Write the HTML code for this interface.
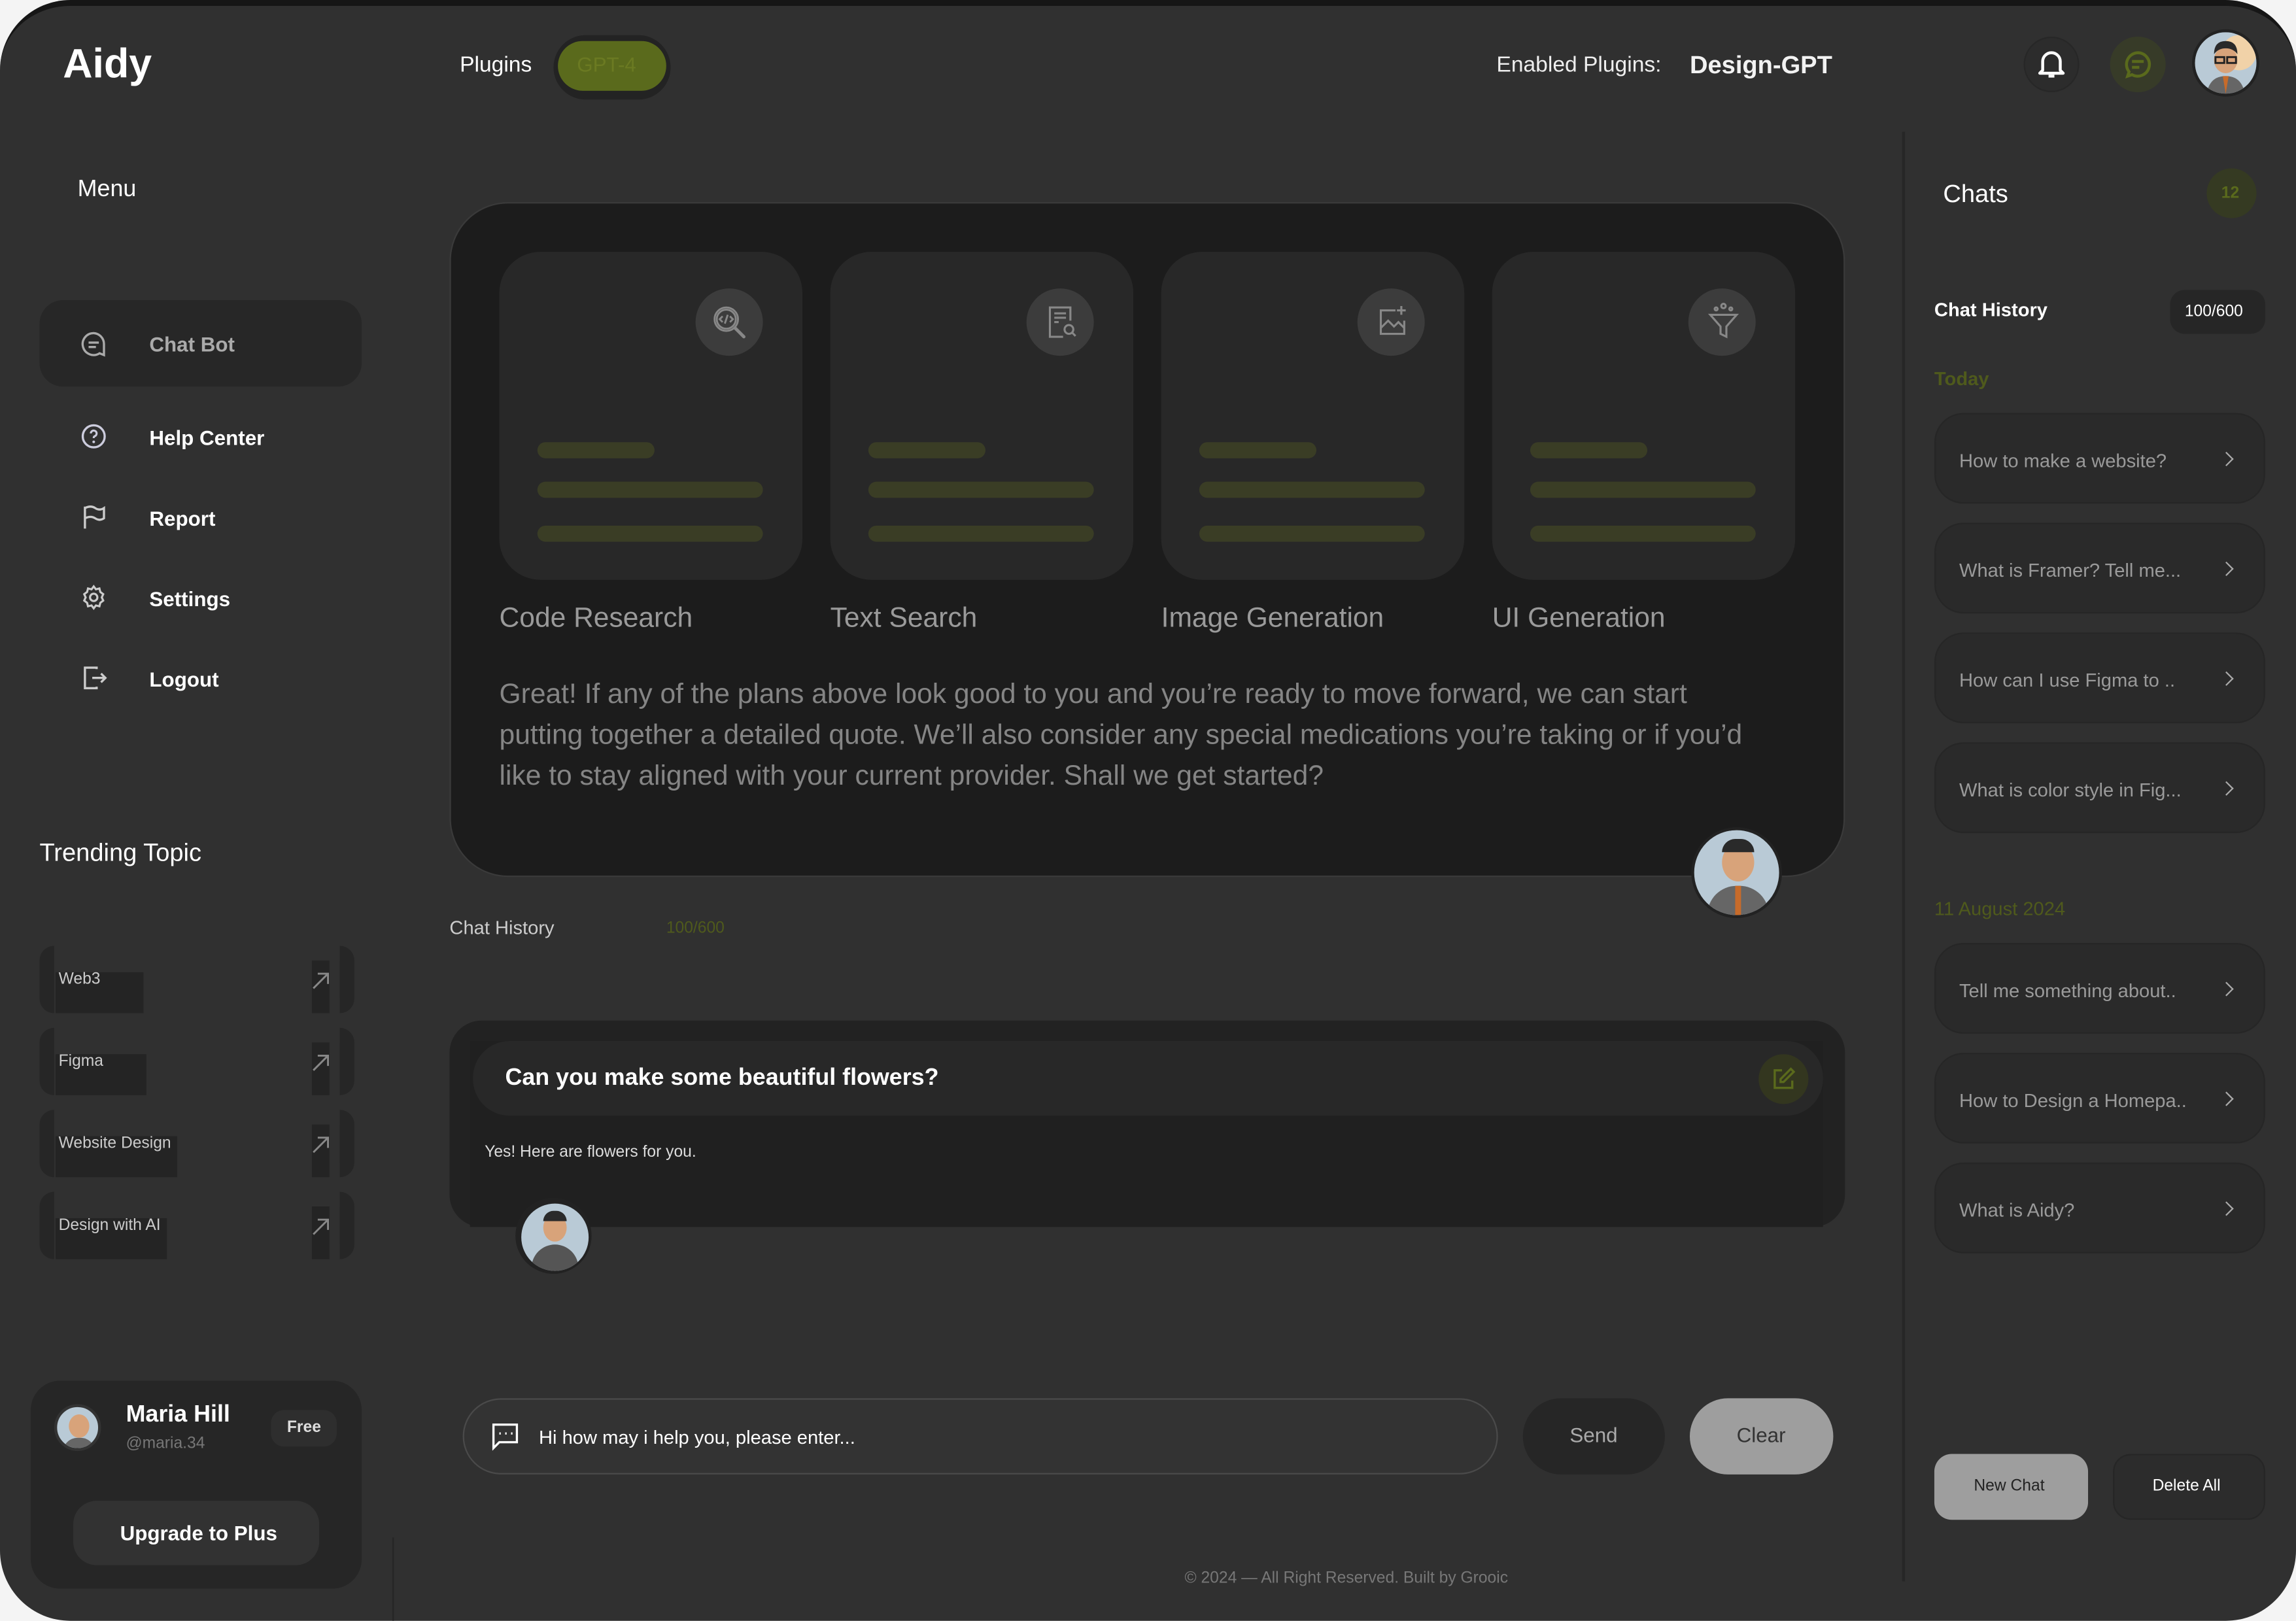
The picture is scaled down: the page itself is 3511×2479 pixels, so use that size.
<!DOCTYPE html>
<html><head><meta charset="utf-8"><style>
*{margin:0;padding:0;box-sizing:border-box}
html,body{width:3511px;height:2478px;overflow:hidden;background:#f4f4f4;font-family:"Liberation Sans",sans-serif}
#w{position:absolute;left:0;top:0;width:1568px;height:1107px;transform:scale(2.23916);transform-origin:0 0}
.a{position:absolute}
.panel{left:0;top:0;width:1568px;height:1107px;background:#303030;border-radius:48px;border-top:4px solid #161616}
.t{position:absolute;white-space:nowrap;line-height:1}
.card{position:absolute;top:172px;width:207px;height:224px;background:#282828;border-radius:28px}
.card .ic{position:absolute;left:134px;top:25px;width:46px;height:46px;border-radius:50%;background:#3c3c3c}
.bar{position:absolute;left:26px;height:11px;border-radius:6px;background:#3a3d25}
.lbl{position:absolute;top:412px;font-size:19px;color:#9a9a9a}
.item{position:absolute;left:1321px;width:226px;height:62px;background:#2a2a2a;border-radius:20px;border:1px solid #262626}
.item span{position:absolute;left:16px;top:24px;font-size:13px;color:#9a9a9a;white-space:nowrap}
.item i{position:absolute;right:22px;top:27px;width:7px;height:7px;border-right:1.5px solid #aaa;border-top:1.5px solid #aaa;transform:rotate(45deg)}
.topic{position:absolute;left:27px;width:215px;height:46px}
.topic .l{position:absolute;left:0;top:0;width:10px;height:46px;border-radius:10px 0 0 10px;background:#262626}
.topic .r{position:absolute;right:0;top:0;width:10px;height:46px;border-radius:0 10px 10px 0;background:#262626}
.topic .bg{position:absolute;left:11px;top:18px;height:28px;background:#242424}
.topic span{position:absolute;left:13px;top:17px;font-size:11px;color:#ccc;white-space:nowrap}
.topic .ab{position:absolute;left:186px;top:10px;width:12px;height:36px;background:#242424}
.menu span{position:absolute;font-size:14px;color:#fff;font-weight:bold}
</style></head><body><div id="w">
<div class="a panel"></div>
<div class="t" style="left:43px;top:30px;font-size:28px;font-weight:bold;color:#fff">Aidy</div>
<div class="t" style="left:314px;top:37px;font-size:15px;color:#fff">Plugins</div>
<div class="a" style="left:378px;top:24px;width:80px;height:44px;border-radius:22px;background:#232323"></div>
<div class="a" style="left:381px;top:28px;width:74px;height:34px;border-radius:17px;background:#5a6a1c"></div>
<div class="t" style="left:394px;top:37px;font-size:14px;color:#6b7a22">GPT-4</div>
<div class="t" style="left:1022px;top:37px;font-size:15px;color:#eee">Enabled Plugins:</div>
<div class="t" style="left:1154px;top:36px;font-size:17px;font-weight:bold;color:#f2f2f2">Design-GPT</div>
<div class="a" style="left:1382px;top:25px;width:38px;height:38px;border-radius:50%;background:#2c2c2c;border:1px solid #272727"></div>
<svg class="a" style="left:1391px;top:33px" width="20" height="22" viewBox="0 0 20 22"><path d="M4 15V9a6 6 0 0 1 12 0v6l2 2H2z" fill="none" stroke="#fff" stroke-width="2" stroke-linejoin="round"/><path d="M8 19h4" stroke="#fff" stroke-width="2"/></svg>
<div class="a" style="left:1441px;top:25px;width:38px;height:38px;border-radius:50%;background:#373b28"></div>
<svg class="a" style="left:1450px;top:34px" width="20" height="20" viewBox="0 0 20 20"><path d="M10 2a8 8 0 1 1-4 15l-3 1 1-3A8 8 0 0 1 10 2z" fill="none" stroke="#5a6a1c" stroke-width="2"/><path d="M6 8h8M6 12h5" stroke="#5a6a1c" stroke-width="2"/></svg>
<div class="a" style="left:1497px;top:20px;width:46px;height:46px;border-radius:50%;background:#222"></div>
<svg class="a" style="left:1499px;top:22px" width="42" height="42" viewBox="0 0 42 42"><defs><clipPath id="c1"><circle cx="21" cy="21" r="21"/></clipPath></defs><g clip-path="url(#c1)"><rect width="42" height="42" fill="#b9cad6"/><circle cx="30" cy="14" r="12" fill="#f1d2a8"/><path d="M8 42q2-12 13-12t13 12z" fill="#666"/><path d="M19 30l2 12 2-12z" fill="#c76b2a"/><ellipse cx="21" cy="19" rx="8" ry="9" fill="#d8a37a"/><path d="M13 15q0-9 8-9t8 9q-3-4-8-4t-8 4z" fill="#2a2a2a"/><rect x="14" y="17" width="6" height="4" fill="none" stroke="#222" stroke-width="1.3"/><rect x="22" y="17" width="6" height="4" fill="none" stroke="#222" stroke-width="1.3"/></g></svg>

<div class="t" style="left:53px;top:122px;font-size:16px;color:#fff">Menu</div>
<div class="a" style="left:27px;top:205px;width:220px;height:59px;border-radius:16px;background:#272727"></div>
<svg class="a" style="left:55px;top:226px" width="18" height="18" viewBox="0 0 18 18"><path d="M9 1.5a7.5 7.5 0 1 0 4 13.8l3 1.2V9A7.5 7.5 0 0 0 9 1.5z" fill="none" stroke="#aaa" stroke-width="1.5"/><path d="M5.5 8h7M5.5 11h5" stroke="#aaa" stroke-width="1.5"/></svg>
<div class="t" style="left:102px;top:228px;font-size:14px;color:#aaa;font-weight:bold">Chat Bot</div>
<div class="menu">
<svg class="a" style="left:55px;top:289px" width="18" height="18" viewBox="0 0 18 18"><circle cx="9" cy="9" r="7.5" fill="none" stroke="#ccd" stroke-width="1.5"/><path d="M7 7a2 2 0 1 1 2.5 2c-.5.2-.5.6-.5 1.2" fill="none" stroke="#ccd" stroke-width="1.4"/><circle cx="9" cy="12.8" r=".9" fill="#ccd"/></svg>
<span style="left:102px;top:291px">Help Center</span>
<svg class="a" style="left:55px;top:344px" width="18" height="18" viewBox="0 0 18 18"><path d="M3 17V2M3 3q4-2 7 0t6 0v7q-3 2-6 0t-7 0" fill="none" stroke="#ccc" stroke-width="1.5"/></svg>
<span style="left:102px;top:346px">Report</span>
<svg class="a" style="left:55px;top:399px" width="18" height="18" viewBox="0 0 18 18"><circle cx="9" cy="9" r="2.5" fill="none" stroke="#ccc" stroke-width="1.4"/><path d="M9 1.5l1.5 2 2.4-.6.6 2.4 2 1.5-1 2.2 1 2.2-2 1.5-.6 2.4-2.4-.6L9 16.5l-1.5-2-2.4.6-.6-2.4-2-1.5 1-2.2-1-2.2 2-1.5.6-2.4 2.4.6z" fill="none" stroke="#ccc" stroke-width="1.4"/></svg>
<span style="left:102px;top:401px">Settings</span>
<svg class="a" style="left:55px;top:454px" width="18" height="18" viewBox="0 0 18 18"><path d="M11 3V2H3v14h8v-1" fill="none" stroke="#ccc" stroke-width="1.5"/><path d="M8 9h9M14 6l3 3-3 3" fill="none" stroke="#ccc" stroke-width="1.5"/></svg>
<span style="left:102px;top:456px">Logout</span>
</div>
<div class="t" style="left:27px;top:574px;font-size:17px;color:#fff">Trending Topic</div>
<div class="topic" style="top:646px"><div class="l"></div><div class="r"></div><div class="bg" style="width:60px"></div><div class="ab"></div><span>Web3</span></div>
<div class="topic" style="top:702px"><div class="l"></div><div class="r"></div><div class="bg" style="width:62px"></div><div class="ab"></div><span>Figma</span></div>
<div class="topic" style="top:758px"><div class="l"></div><div class="r"></div><div class="bg" style="width:83px"></div><div class="ab"></div><span>Website Design</span></div>
<div class="topic" style="top:814px"><div class="l"></div><div class="r"></div><div class="bg" style="width:76px"></div><div class="ab"></div><span>Design with AI</span></div>
<svg class="a" style="left:212px;top:662px" width="14" height="200"><g fill="none" stroke="#888" stroke-width="1.3"><path d="M2 13L12 3M5 3h7v7"/><path d="M2 13L12 3M5 3h7v7" transform="translate(0,56)"/><path d="M2 13L12 3M5 3h7v7" transform="translate(0,112)"/><path d="M2 13L12 3M5 3h7v7" transform="translate(0,168)"/></g></svg>

<div class="a" style="left:21px;top:943px;width:226px;height:142px;border-radius:20px;background:#262626"></div>
<div class="a" style="left:37px;top:959px;width:32px;height:32px;border-radius:50%;background:#b9cad6;border:2px solid #333;overflow:hidden"><div style="position:absolute;left:8px;top:5px;width:14px;height:16px;border-radius:50%;background:#d8a37a"></div><div style="position:absolute;left:4px;top:21px;width:22px;height:12px;border-radius:10px 10px 0 0;background:#666"></div></div>
<div class="t" style="left:86px;top:959px;font-size:16px;font-weight:bold;color:#fff">Maria Hill</div>
<div class="t" style="left:86px;top:981px;font-size:11px;color:#777">@maria.34</div>
<div class="a" style="left:185px;top:963px;width:45px;height:25px;border-radius:9px;background:#2e2e2e"></div>
<div class="t" style="left:196px;top:970px;font-size:11px;color:#ddd;font-weight:bold">Free</div>
<div class="a" style="left:50px;top:1025px;width:168px;height:44px;border-radius:16px;background:#323232"></div>
<div class="t" style="left:82px;top:1040px;font-size:14px;font-weight:bold;color:#fff">Upgrade to Plus</div>
<div class="a" style="left:268px;top:1050px;width:1px;height:57px;background:#262626"></div>

<div class="a" style="left:307px;top:138px;width:953px;height:461px;border-radius:40px;background:#1c1c1c;border:1px solid #3a3a3a"></div>
<div class="card" style="left:341px"><div class="ic"></div><div class="bar" style="top:130px;width:80px"></div><div class="bar" style="top:157px;width:154px"></div><div class="bar" style="top:187px;width:154px"></div></div>
<div class="card" style="left:567px"><div class="ic"></div><div class="bar" style="top:130px;width:80px"></div><div class="bar" style="top:157px;width:154px"></div><div class="bar" style="top:187px;width:154px"></div></div>
<div class="card" style="left:793px"><div class="ic"></div><div class="bar" style="top:130px;width:80px"></div><div class="bar" style="top:157px;width:154px"></div><div class="bar" style="top:187px;width:154px"></div></div>
<div class="card" style="left:1019px"><div class="ic"></div><div class="bar" style="top:130px;width:80px"></div><div class="bar" style="top:157px;width:154px"></div><div class="bar" style="top:187px;width:154px"></div></div>
<svg class="a" style="left:486px;top:208px" width="26" height="26" viewBox="0 0 26 26" fill="none" stroke="#888" stroke-width="1.3"><circle cx="10" cy="10" r="8"/><circle cx="10" cy="10" r="6.5"/><path d="M16 16l6 6" stroke-width="2.2" stroke-linecap="round"/><path d="M7.5 8l-2 2 2 2M12.5 8l2 2-2 2M11 7l-2 6"/></svg>
<svg class="a" style="left:712px;top:207px" width="26" height="26" viewBox="0 0 26 26" fill="none" stroke="#888" stroke-width="1.4"><path d="M14 23H5V3h14v9"/><path d="M8 7h8M8 10h8M8 13h3"/><circle cx="18" cy="18" r="3"/><path d="M20 20l2.5 2.5"/></svg>
<svg class="a" style="left:938px;top:207px" width="26" height="26" viewBox="0 0 26 26" fill="none" stroke="#888" stroke-width="1.4"><path d="M15 5H5v16h16v-9"/><path d="M5 17l5-5 4 4 3-3 4 4"/><path d="M19 2v6M16 5h6"/></svg>
<svg class="a" style="left:1164px;top:205px" width="26" height="28" viewBox="0 0 26 28" fill="none" stroke="#888" stroke-width="1.4"><path d="M4 10h18l-7 8v7l-4-2v-5z"/><circle cx="13" cy="4" r="1.5"/><circle cx="8" cy="6" r="1"/><circle cx="18" cy="6" r="1"/></svg>
<div class="lbl" style="left:341px">Code Research</div>
<div class="lbl" style="left:567px">Text Search</div>
<div class="lbl" style="left:793px">Image Generation</div>
<div class="lbl" style="left:1019px">UI Generation</div>
<div class="a" style="left:341px;top:461px;width:862px;font-size:19px;line-height:28px;color:#858585">Great! If any of the plans above look good to you and you’re ready to move forward, we can start putting together a detailed quote. We’ll also consider any special medications you’re taking or if you’d like to stay aligned with your current provider. Shall we get started?</div>
<div class="a" style="left:1155px;top:565px;width:62px;height:62px;border-radius:50%;background:#b9cad6;border:2px solid #222;overflow:hidden"><div style="position:absolute;left:19px;top:9px;width:22px;height:26px;border-radius:50%;background:#d8a37a"></div><div style="position:absolute;left:19px;top:6px;width:22px;height:9px;border-radius:10px 10px 0 0;background:#2a2a2a"></div><div style="position:absolute;left:9px;top:38px;width:42px;height:24px;border-radius:20px 20px 0 0;background:#666"></div><div style="position:absolute;left:28px;top:38px;width:4px;height:22px;background:#c76b2a"></div></div>

<div class="t" style="left:307px;top:627px;font-size:13px;color:#ccc">Chat History</div>
<div class="t" style="left:455px;top:629px;font-size:11px;color:#4f5a1c">100/600</div>
<div class="a" style="left:307px;top:697px;width:953px;height:141px;border-radius:22px;background:#222"></div>
<div class="a" style="left:321px;top:711px;width:924px;height:127px;background:#202020"></div>
<div class="a" style="left:323px;top:711px;width:922px;height:51px;border-radius:25px;background:#282828"></div>
<div class="t" style="left:345px;top:729px;font-size:16px;font-weight:bold;color:#fff">Can you make some beautiful flowers?</div>
<div class="a" style="left:1201px;top:720px;width:34px;height:34px;border-radius:50%;background:#33361f"></div>
<svg class="a" style="left:1209px;top:728px" width="18" height="18" viewBox="0 0 18 18" fill="none" stroke="#5a6a1c" stroke-width="1.5"><path d="M8 3H3v12h12v-5"/><path d="M14 2l2 2-7 7H7V9z"/></svg>
<div class="t" style="left:331px;top:782px;font-size:11px;color:#ddd">Yes! Here are flowers for you.</div>
<div class="a" style="left:352px;top:818px;width:52px;height:52px;border-radius:50%;background:#222"></div>
<div class="a" style="left:356px;top:822px;width:46px;height:46px;border-radius:50%;background:#b9cad6;overflow:hidden"><div style="position:absolute;left:15px;top:7px;width:16px;height:19px;border-radius:50%;background:#d8a37a"></div><div style="position:absolute;left:15px;top:5px;width:16px;height:7px;border-radius:8px 8px 0 0;background:#2a2a2a"></div><div style="position:absolute;left:7px;top:28px;width:32px;height:20px;border-radius:16px 16px 0 0;background:#555"></div></div>

<div class="a" style="left:316px;top:955px;width:707px;height:52px;border-radius:26px;background:#333;border:1.5px solid #4a4a4a"></div>
<svg class="a" style="left:335px;top:971px" width="20" height="20" viewBox="0 0 20 20" fill="none" stroke="#fff" stroke-width="1.5"><path d="M2 2h16v12H6l-4 4z"/><path d="M6 8h1M10 8h1M14 8h1"/></svg>
<div class="t" style="left:368px;top:975px;font-size:13px;color:#fff">Hi how may i help you, please enter...</div>
<div class="a" style="left:1040px;top:955px;width:97px;height:52px;border-radius:26px;background:#262626"></div>
<div class="t" style="left:1072px;top:973px;font-size:14px;color:#aaa">Send</div>
<div class="a" style="left:1154px;top:955px;width:98px;height:52px;border-radius:26px;background:#9e9e9e"></div>
<div class="t" style="left:1186px;top:973px;font-size:14px;color:#333">Clear</div>
<div class="t" style="left:809px;top:1073px;font-size:11px;color:#777">© 2024 — All Right Reserved. Built by Grooic</div>

<div class="a" style="left:1299px;top:90px;width:2px;height:990px;background:#262626"></div>
<div class="t" style="left:1327px;top:124px;font-size:17px;color:#fff">Chats</div>
<div class="a" style="left:1507px;top:115px;width:34px;height:34px;border-radius:50%;background:#353a22"></div>
<div class="t" style="left:1517px;top:127px;font-size:11px;color:#5a6a1c;font-weight:bold">12</div>
<div class="t" style="left:1321px;top:205px;font-size:13px;color:#fff;font-weight:bold">Chat History</div>
<div class="a" style="left:1482px;top:198px;width:65px;height:30px;border-radius:10px;background:#262626"></div>
<div class="t" style="left:1492px;top:208px;font-size:11px;color:#fff">100/600</div>
<div class="t" style="left:1321px;top:252px;font-size:13px;color:#4f5a1c;font-weight:bold">Today</div>
<div class="item" style="top:282px"><span>How to make a website?</span><i></i></div>
<div class="item" style="top:357px"><span>What is Framer? Tell me...</span><i></i></div>
<div class="item" style="top:432px"><span>How can I use Figma to ..</span><i></i></div>
<div class="item" style="top:507px"><span>What is color style in Fig...</span><i></i></div>
<div class="t" style="left:1321px;top:614px;font-size:13px;color:#4f5a1c">11 August 2024</div>
<div class="item" style="top:644px"><span>Tell me something about..</span><i></i></div>
<div class="item" style="top:719px"><span>How to Design a Homepa..</span><i></i></div>
<div class="item" style="top:794px"><span>What is Aidy?</span><i></i></div>
<div class="a" style="left:1321px;top:993px;width:105px;height:45px;border-radius:12px;background:#9e9e9e"></div>
<div class="t" style="left:1348px;top:1010px;font-size:11px;color:#222">New Chat</div>
<div class="a" style="left:1443px;top:993px;width:104px;height:45px;border-radius:12px;background:#2c2c2c;border:1px solid #262626"></div>
<div class="t" style="left:1470px;top:1010px;font-size:11px;color:#fff">Delete All</div>
</div></body></html>
